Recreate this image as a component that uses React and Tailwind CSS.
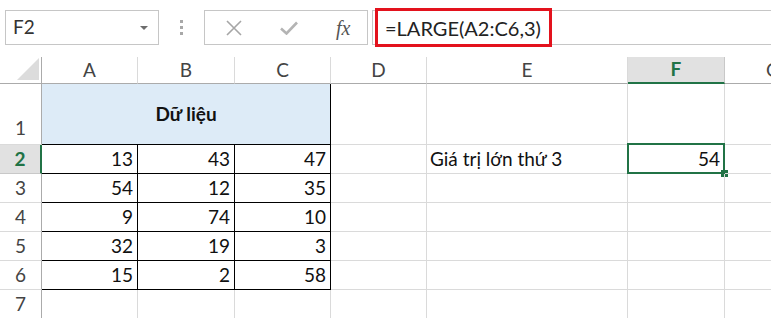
import React from "react";

const cols = ["A", "B", "C", "D", "E", "F", "G"];
const data = [
  [13, 43, 47],
  [54, 12, 35],
  [9, 74, 10],
  [32, 19, 3],
  [15, 2, 58],
];

const font = { fontFamily: "Lato, 'Open Sans', sans-serif" };

function FormulaBar() {
  return (
    <div className="flex items-center h-[57px] pt-[10px] pb-[12px] pl-[5px] text-[#333]">
      {/* name box */}
      <div className="flex items-center justify-between w-[154px] h-[35px] border border-[#c6c6c6] pl-[7px] pr-[10px]">
        <span className="text-[19px]">F2</span>
        <span className="w-0 h-0 border-l-[4px] border-r-[4px] border-t-[4px] border-l-transparent border-r-transparent border-t-[#6d6d6d]" />
      </div>
      {/* grip */}
      <div className="flex flex-col gap-[3px] ml-[21px] mr-[21px]">
        <span className="w-[3px] h-[3px] bg-[#a8a8a8]" />
        <span className="w-[3px] h-[3px] bg-[#a8a8a8]" />
        <span className="w-[3px] h-[3px] bg-[#a8a8a8]" />
      </div>
      {/* cancel / enter / function */}
      <div className="flex items-center w-[164px] h-[35px] border border-[#c6c6c6]">
        <svg className="ml-[21px]" width="16" height="16" viewBox="0 0 16 16">
          <path d="M1 1L15 15M15 1L1 15" stroke="#a6a6a6" strokeWidth="1.6" />
        </svg>
        <svg className="ml-[38px]" width="18" height="14" viewBox="0 0 18 14">
          <path d="M1 7.5L6.5 12.5L17 1.5" stroke="#b4b4b4" strokeWidth="2.6" fill="none" />
        </svg>
        <span className="ml-[38px] italic text-[20px] text-[#555]" style={{ fontFamily: "'Liberation Serif', serif" }}>
          fx
        </span>
      </div>
      {/* formula input */}
      <div className="relative flex items-center flex-1 h-[35px] ml-[4px] border-y border-l border-[#c6c6c6] pl-[12px]">
        <span className="text-[20px] text-[#222]">=LARGE(A2:C6,3)</span>
        <span className="absolute left-[2px] top-[-3px] w-[177px] h-[39px] border-[3px] border-[#e3121d]" />
      </div>
    </div>
  );
}

function Cell({ children, className = "" }) {
  return (
    <div className={`relative flex items-center border-r border-b border-[#dadada] ${className}`}>
      {children}
    </div>
  );
}

export default function App() {
  return (
    <div className="w-[771px] h-[318px] overflow-hidden bg-white" style={font}>
      <FormulaBar />
      <div className="grid grid-cols-[42px_96px_97px_96px_96px_201px_97px_97px] grid-rows-[27px_61px_29px_29px_29px_29px_29px_29px] text-[19px]">
        {/* select-all corner */}
        <div className="flex items-end justify-end border-r border-b border-[#ababab] pr-[2px] pb-[3px]">
          <svg width="22" height="22" viewBox="0 0 22 22">
            <polygon points="22,0 22,22 0,22" fill="#dcdcdc" />
          </svg>
        </div>
        {cols.map((c) =>
          c === "F" ? (
            <div key={c} className="flex items-center justify-center bg-[#e1e1e1] border-r border-[#c8c8c8] border-b-2 border-b-[#217346] font-bold text-[#217346]">
              {c}
            </div>
          ) : (
            <div key={c} className="flex items-center justify-center border-r border-[#dadada] border-b border-b-[#ababab] text-[#444]">
              {c}
            </div>
          )
        )}

        {/* row 1 */}
        <div className="flex items-end justify-center pb-[2px] border-r border-[#ababab] border-b border-b-[#dadada] text-[#444]">1</div>
        <div className="col-span-3 flex items-center justify-center bg-[#ddebf7] border-r border-b border-black font-bold text-[#111]">
          Dữ liệu
        </div>
        <Cell />
        <Cell />
        <Cell />
        <Cell />

        {data.map((row, i) => {
          const r = i + 2;
          const sel = r === 2;
          return (
            <React.Fragment key={r}>
              <div
                className={`flex items-center justify-center border-b ${
                  sel
                    ? "bg-[#e1e1e1] border-r-2 border-r-[#217346] border-b-[#c8c8c8] font-bold text-[#217346]"
                    : "border-r border-r-[#ababab] border-b-[#dadada] text-[#444]"
                }`}
              >
                {r}
              </div>
              {row.map((v, j) => (
                <div key={j} className="flex items-center justify-end pr-[4px] border-r border-b border-black text-[#111]">
                  {v}
                </div>
              ))}
              <Cell />
              <Cell className="pl-[3px] text-[#111]">{sel ? "Giá trị lớn thứ 3" : ""}</Cell>
              <Cell className="justify-end pr-[4px] text-[#111]">
                {sel && (
                  <>
                    54
                    <span className="absolute -left-[1px] -top-[2px] -right-[1px] -bottom-[1px] border-2 border-[#217346]" />
                    <span className="absolute -right-[4px] -bottom-[4px] w-[7px] h-[7px] bg-[#217346]" />
                  </>
                )}
              </Cell>
              <Cell />
            </React.Fragment>
          );
        })}

        {/* row 7 */}
        <div className="flex items-center justify-center border-r border-[#ababab] text-[#444]">7</div>
        <Cell className="border-b-0" />
        <Cell className="border-b-0" />
        <Cell className="border-b-0" />
        <Cell className="border-b-0" />
        <Cell className="border-b-0" />
        <Cell className="border-b-0" />
        <Cell className="border-b-0" />
      </div>
    </div>
  );
}
